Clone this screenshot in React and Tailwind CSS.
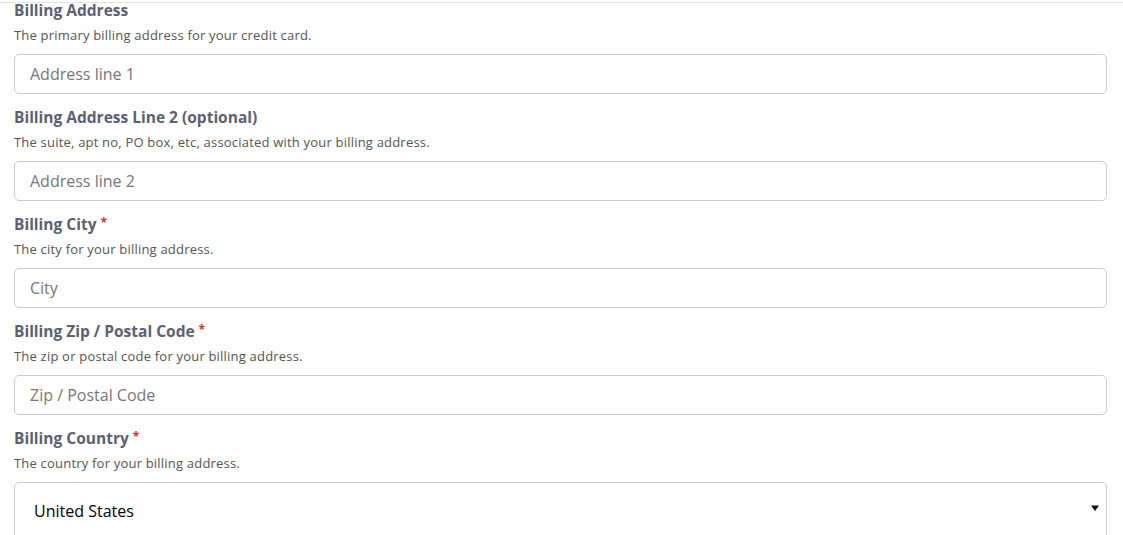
import React from "react";

const fields = [
  { label: "Billing Address", help: "The primary billing address for your credit card.", placeholder: "Address line 1" },
  { label: "Billing Address Line 2 (optional)", help: "The suite, apt no, PO box, etc, associated with your billing address.", placeholder: "Address line 2" },
  { label: "Billing City", required: true, help: "The city for your billing address.", placeholder: "City" },
  { label: "Billing Zip / Postal Code", required: true, help: "The zip or postal code for your billing address.", placeholder: "Zip / Postal Code" },
];

function Label({ text, required }) {
  return (
    <div className="h-[15px] text-[15.5px] leading-[15px] font-bold text-[#5b6173] whitespace-nowrap">
      {text}
      {required && <span className="ml-1 text-[12px] leading-none align-top text-[#c0392b]">*</span>}
    </div>
  );
}

function Help({ children }) {
  return <div className="mt-[9px] mb-[11px] h-[16px] text-[13px] leading-[16px] tracking-[0.2px] text-[#555]">{children}</div>;
}

export default function App() {
  return (
    <div className="w-[1123px] h-[535px] overflow-hidden bg-white" style={{ fontFamily: '"Open Sans", "Liberation Sans", sans-serif' }}>
      <div className="h-[2px]" />
      <div className="border-t border-[#e2e2e2] pl-[14px] pr-[16px]">
        {fields.map((f, i) => (
          <div key={i} className="mb-[16px]">
            <Label text={f.label} required={f.required} />
            <Help>{f.help}</Help>
            <input
              type="text"
              placeholder={f.placeholder}
              className="block w-full h-[40px] px-[15px] border border-[#cccccc] rounded-[5px] text-[16px] text-[#333] placeholder:text-[#777] outline-none"
            />
          </div>
        ))}

        {/* country */}
        <div>
          <Label text="Billing Country" required />
          <Help>The country for your billing address.</Help>
          <div className="relative">
            <select
              defaultValue="US"
              className="block w-full h-[58px] pl-[19px] pr-[30px] border border-[#cccccc] rounded-[5px] text-[16px] text-black bg-white appearance-none outline-none"
            >
              <option value="US">United States</option>
              <option value="CA">Canada</option>
            </select>
            <svg className="absolute right-[8px] top-[22px] w-[8px] h-[8px] pointer-events-none" viewBox="0 0 8 8">
              <path d="M0 1.5h8L4 7z" fill="#111" />
            </svg>
          </div>
        </div>
      </div>
    </div>
  );
}
